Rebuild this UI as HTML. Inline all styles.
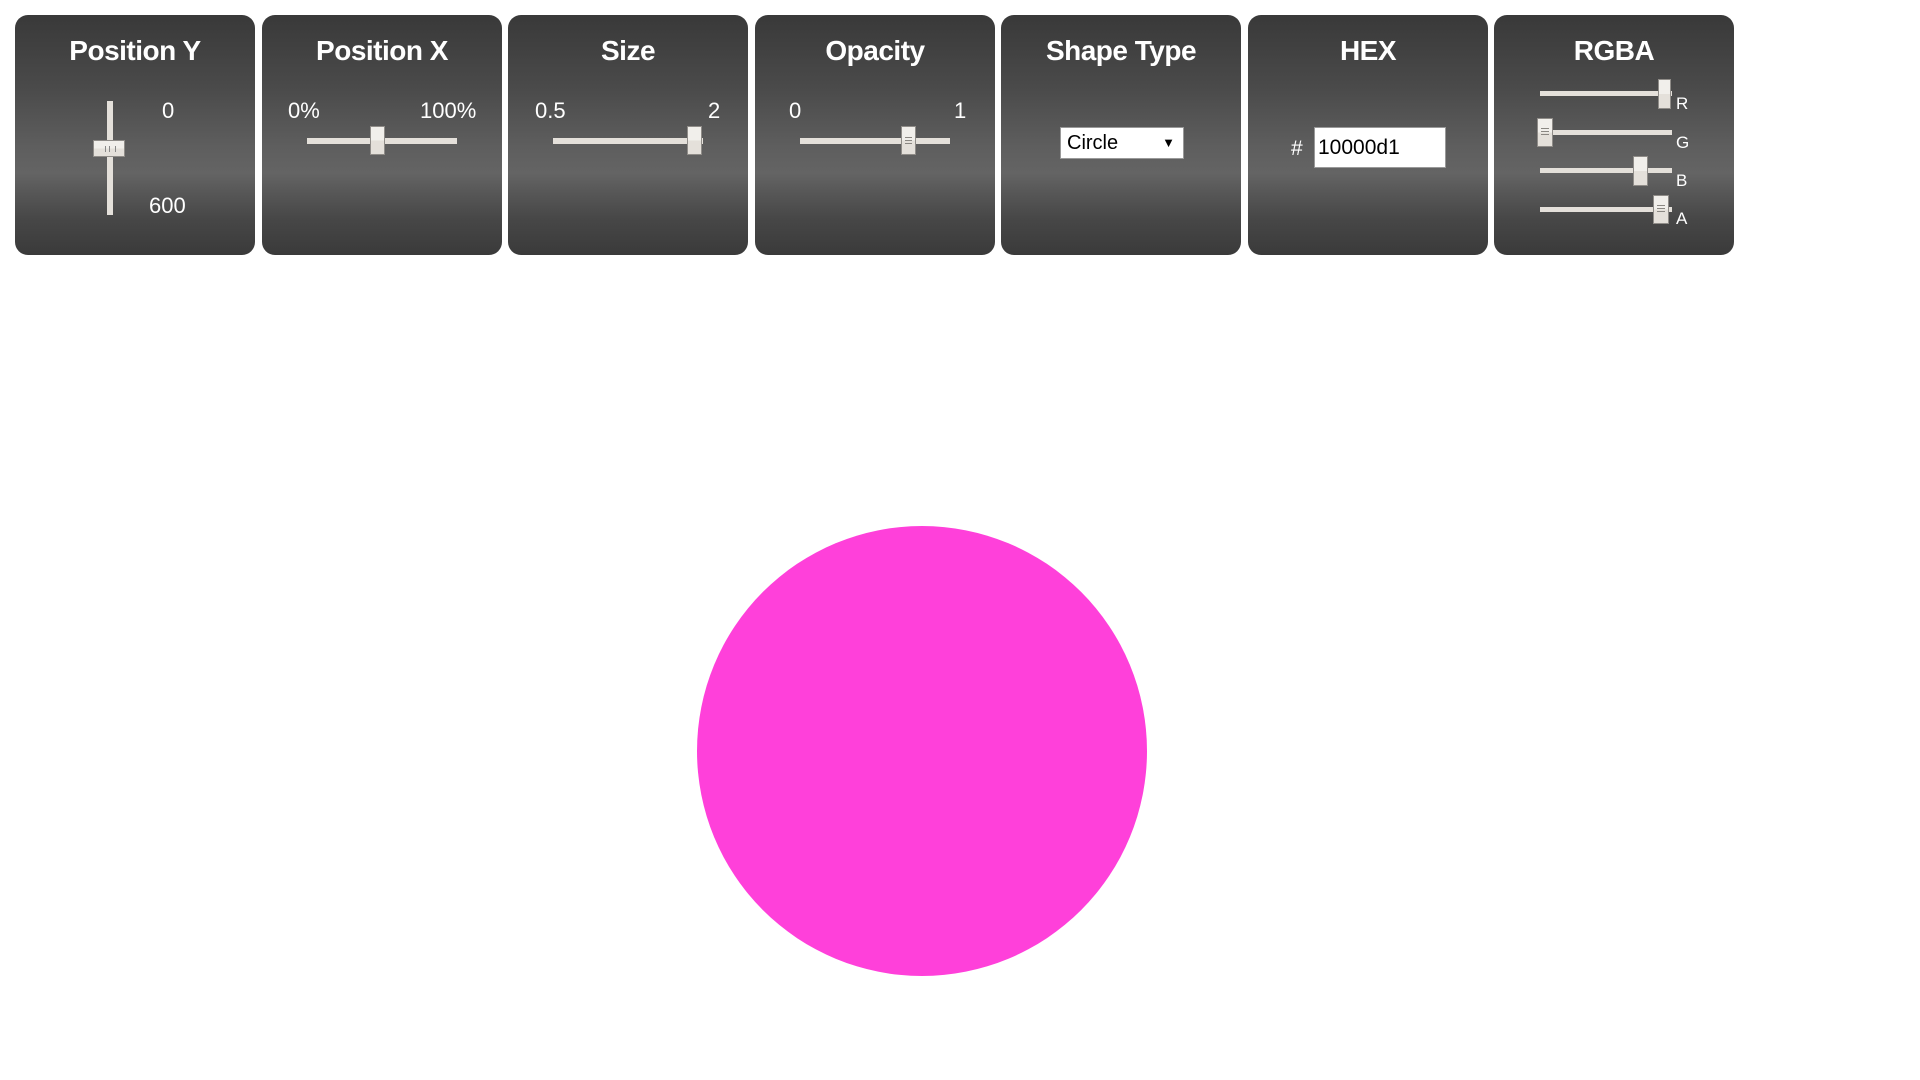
<!DOCTYPE html>
<html><head><meta charset="utf-8"><style>
body{margin:0;width:1920px;height:1080px;background:#fff;position:relative;overflow:hidden;font-family:"Liberation Sans",sans-serif;}
.p{position:absolute;top:15px;width:240px;height:240px;border-radius:13px;
background:linear-gradient(to bottom,#393939 0%,#4a4a4a 30%,#5e5e5e 55%,#646464 66%,#5a5a5a 72%,#474747 85%,#3a3a3a 100%);color:#fff;}
.t{position:absolute;top:20px;left:0;width:240px;text-align:center;font-size:28px;font-weight:bold;letter-spacing:-0.5px;}
.l{position:absolute;font-size:22px;color:#fff;}
.tr{position:absolute;background:#e4e0da;}
.th{position:absolute;background:linear-gradient(#f1efeb 50%,#e4e0da 50%);border:1px solid #8f8c88;box-sizing:border-box;}
.g{position:absolute;left:3px;right:3px;height:1px;background:#8a8782;}
.s{position:absolute;font-size:17px;color:#fff;}
</style></head><body>
<div class="p" style="left:15px"><div class="t">Position Y</div>
<div class="tr" style="left:92px;top:86px;width:6px;height:114px"></div>
<div class="th" style="left:78px;top:125px;width:32px;height:17px"><div style="position:absolute;left:11px;top:5px;width:9px;height:6px;border-left:1px solid #888;border-right:1px solid #888"></div><div style="position:absolute;left:15px;top:5px;width:1px;height:6px;background:#888"></div></div>
<div class="l" style="left:147px;top:83px">0</div>
<div class="l" style="left:134px;top:178px">600</div></div>
<div class="p" style="left:262px"><div class="t">Position X</div>
<div class="l" style="left:26px;top:83px">0%</div><div class="l" style="left:158px;top:83px">100%</div>
<div class="tr" style="left:45px;top:123px;width:150px;height:6px"></div>
<div class="th" style="left:108px;top:111px;width:15px;height:29px"></div></div>
<div class="p" style="left:508px"><div class="t">Size</div>
<div class="l" style="left:27px;top:83px">0.5</div><div class="l" style="left:200px;top:83px">2</div>
<div class="tr" style="left:45px;top:123px;width:150px;height:6px"></div>
<div class="th" style="left:179px;top:111px;width:15px;height:29px"></div></div>
<div class="p" style="left:755px"><div class="t">Opacity</div>
<div class="l" style="left:34px;top:83px">0</div><div class="l" style="left:199px;top:83px">1</div>
<div class="tr" style="left:45px;top:123px;width:150px;height:6px"></div>
<div class="th" style="left:146px;top:111px;width:15px;height:29px"><div class="g" style="top:10px"></div><div class="g" style="top:13px"></div><div class="g" style="top:16px"></div></div></div>
<div class="p" style="left:1001px"><div class="t">Shape Type</div>
<div style="position:absolute;left:59px;top:112px;width:124px;height:32px;background:#fff;border:1px solid #999;box-sizing:border-box;color:#000;font-size:20px;line-height:30px;padding-left:6px">Circle<span style="position:absolute;right:8px;top:0;font-size:13px">&#9660;</span></div></div>
<div class="p" style="left:1248px"><div class="t">HEX</div>
<div class="l" style="left:43px;top:122px;font-size:21px">#</div>
<div style="position:absolute;left:66px;top:112px;width:132px;height:41px;background:#fff;border:1px solid #999;box-sizing:border-box;color:#000;font-size:21px;line-height:39px;padding-left:3px">10000d1</div></div>
<div class="p" style="left:1494px"><div class="t">RGBA</div>
<div class="tr" style="left:46px;top:76px;width:132px;height:5px"></div>
<div class="th" style="left:164px;top:64px;width:13px;height:30px"></div>
<div class="s" style="left:182px;top:79px">R</div>
<div class="tr" style="left:46px;top:115px;width:132px;height:5px"></div>
<div class="th" style="left:43px;top:103px;width:16px;height:29px"><div class="g" style="top:9px"></div><div class="g" style="top:12px"></div><div class="g" style="top:15px"></div></div>
<div class="s" style="left:182px;top:118px">G</div>
<div class="tr" style="left:46px;top:153px;width:132px;height:5px"></div>
<div class="th" style="left:139px;top:141px;width:15px;height:30px"></div>
<div class="s" style="left:182px;top:156px">B</div>
<div class="tr" style="left:46px;top:192px;width:132px;height:5px"></div>
<div class="th" style="left:159px;top:180px;width:16px;height:29px"><div class="g" style="top:9px"></div><div class="g" style="top:12px"></div><div class="g" style="top:15px"></div></div>
<div class="s" style="left:182px;top:194px">A</div></div>
<div style="position:absolute;left:697px;top:526px;width:450px;height:450px;border-radius:50%;background:#ff40da"></div>
</body></html>
